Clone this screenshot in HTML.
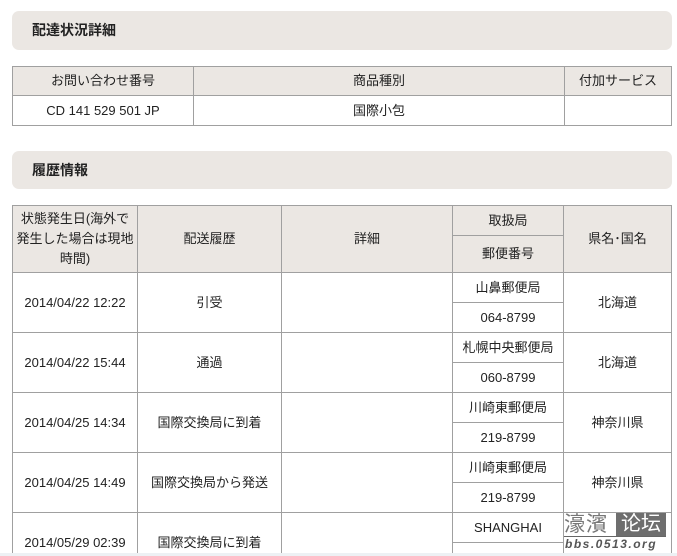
<!DOCTYPE html>
<html><head><meta charset="utf-8"><style>
*{margin:0;padding:0;box-sizing:border-box}
html,body{width:677px;height:556px;overflow:hidden}
body{background:#fff;position:relative;font-family:"Liberation Sans","Noto Sans CJK JP",sans-serif;font-size:13px;color:#222}
#w{position:absolute;left:0;top:0;width:677px;height:556px;overflow:hidden}
.h{position:absolute;left:12px;width:660px;background:#ebe7e3;border-radius:7px;font-weight:bold;font-size:14px;padding-left:20px;color:#222}
.c{position:absolute;border:1px solid #a0a0a0;display:flex;align-items:center;justify-content:center;text-align:center;line-height:20px}
.g{background:#ebe7e3}
</style></head><body><div id="w">
<div class="h" style="top:11px;height:39px;line-height:39px">配達状況詳細</div>
<div class="c g" style="left:12px;top:66px;width:182px;height:30px">お問い合わせ番号</div>
<div class="c g" style="left:193px;top:66px;width:372px;height:30px">商品種別</div>
<div class="c g" style="left:564px;top:66px;width:108px;height:30px">付加サービス</div>
<div class="c" style="left:12px;top:95px;width:182px;height:31px">CD 141 529 501 JP</div>
<div class="c" style="left:193px;top:95px;width:372px;height:31px">国際小包</div>
<div class="c" style="left:564px;top:95px;width:108px;height:31px"></div>

<div class="h" style="top:151px;height:38px;line-height:38px">履歴情報</div>
<div class="c g" style="left:12px;top:205px;width:126px;height:68px">状態発生日(海外で<br>発生した場合は現地<br>時間)</div>
<div class="c g" style="left:137px;top:205px;width:145px;height:68px">配送履歴</div>
<div class="c g" style="left:281px;top:205px;width:172px;height:68px">詳細</div>
<div class="c g" style="left:452px;top:205px;width:112px;height:31px">取扱局</div>
<div class="c g" style="left:452px;top:235px;width:112px;height:38px">郵便番号</div>
<div class="c g" style="left:563px;top:205px;width:109px;height:68px">県名･国名</div>

<div class="c" style="left:12px;top:272px;width:126px;height:61px">2014/04/22 12:22</div>
<div class="c" style="left:137px;top:272px;width:145px;height:61px">引受</div>
<div class="c" style="left:281px;top:272px;width:172px;height:61px"></div>
<div class="c" style="left:452px;top:272px;width:112px;height:31px">山鼻郵便局</div>
<div class="c" style="left:452px;top:302px;width:112px;height:31px">064-8799</div>
<div class="c" style="left:563px;top:272px;width:109px;height:61px">北海道</div>

<div class="c" style="left:12px;top:332px;width:126px;height:61px">2014/04/22 15:44</div>
<div class="c" style="left:137px;top:332px;width:145px;height:61px">通過</div>
<div class="c" style="left:281px;top:332px;width:172px;height:61px"></div>
<div class="c" style="left:452px;top:332px;width:112px;height:31px">札幌中央郵便局</div>
<div class="c" style="left:452px;top:362px;width:112px;height:31px">060-8799</div>
<div class="c" style="left:563px;top:332px;width:109px;height:61px">北海道</div>

<div class="c" style="left:12px;top:392px;width:126px;height:61px">2014/04/25 14:34</div>
<div class="c" style="left:137px;top:392px;width:145px;height:61px">国際交換局に到着</div>
<div class="c" style="left:281px;top:392px;width:172px;height:61px"></div>
<div class="c" style="left:452px;top:392px;width:112px;height:31px">川崎東郵便局</div>
<div class="c" style="left:452px;top:422px;width:112px;height:31px">219-8799</div>
<div class="c" style="left:563px;top:392px;width:109px;height:61px">神奈川県</div>

<div class="c" style="left:12px;top:452px;width:126px;height:61px">2014/04/25 14:49</div>
<div class="c" style="left:137px;top:452px;width:145px;height:61px">国際交換局から発送</div>
<div class="c" style="left:281px;top:452px;width:172px;height:61px"></div>
<div class="c" style="left:452px;top:452px;width:112px;height:31px">川崎東郵便局</div>
<div class="c" style="left:452px;top:482px;width:112px;height:31px">219-8799</div>
<div class="c" style="left:563px;top:452px;width:109px;height:61px">神奈川県</div>

<div class="c" style="left:12px;top:512px;width:126px;height:61px">2014/05/29 02:39</div>
<div class="c" style="left:137px;top:512px;width:145px;height:61px">国際交換局に到着</div>
<div class="c" style="left:281px;top:512px;width:172px;height:61px"></div>
<div class="c" style="left:452px;top:512px;width:112px;height:31px">SHANGHAI</div>
<div class="c" style="left:452px;top:542px;width:112px;height:31px"></div>
<div class="c" style="left:563px;top:512px;width:109px;height:61px"></div>

<div style="position:absolute;left:564px;top:513px;width:102px;height:38px;background:#fff">
 <div style="position:absolute;left:0;top:0;font-size:21px;line-height:23px;color:#777;letter-spacing:1px">濠濱</div>
 <div style="position:absolute;left:52px;top:0;width:50px;height:23px;background:#6e6e6e;color:#fff;font-size:20px;line-height:23px;text-align:center">论坛</div>
 <div style="position:absolute;left:0;top:23px;width:102px;height:1px;background:#666"></div>
 <div style="position:absolute;left:1px;top:24px;font-size:12px;font-weight:bold;font-style:italic;color:#555;letter-spacing:1.5px;line-height:14px">bbs.0513.org</div>
</div>
<div style="position:absolute;left:0;top:553px;width:677px;height:3px;background:#edf1f4"></div>
</div></body></html>
